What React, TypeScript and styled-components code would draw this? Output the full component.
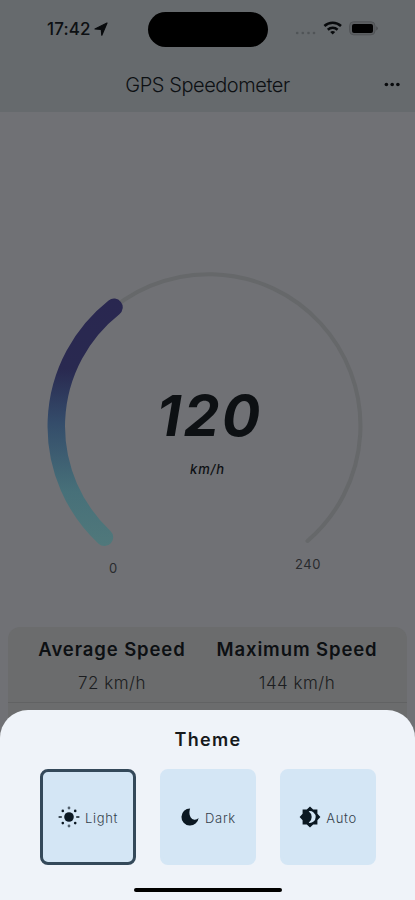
import React from "react";
import styled, { createGlobalStyle } from "styled-components";

const GlobalStyle = createGlobalStyle`
  *, *::before, *::after { box-sizing: border-box; }
  html, body { margin: 0; padding: 0; }
  body { background: #707175; font-family: Inter, "Liberation Sans", sans-serif; }
`;

const Screen = styled.div`
  width: 415px;
  height: 900px;
  position: relative;
  overflow: hidden;
  background: #707175;
  color: #0d1013;
  display: flex;
  flex-direction: column;
`;

const Header = styled.header`
  height: 112px;
  flex: none;
  background: #666a6d;
`;

const StatusBar = styled.div`
  height: 58px;
  display: grid;
  grid-template-columns: 148px 120px 147px;
  align-items: center;
`;

const Clock = styled.div`
  display: flex;
  align-items: center;
  gap: 4px;
  padding-left: 47px;
  font-size: 17px;
  font-weight: 450;
  letter-spacing: 0.1px;
`;

const Island = styled.div`
  height: 35px;
  border-radius: 18px;
  background: #000;
`;

const Indicators = styled.div`
  display: flex;
  align-items: center;
  padding-left: 27px;
`;

const AppBar = styled.div`
  height: 54px;
  display: grid;
  grid-template-columns: 46px 1fr 46px;
  align-items: center;
`;

const Title = styled.h1`
  grid-column: 2;
  margin: 0;
  text-align: center;
  font-size: 20px;
  line-height: 24px;
  font-weight: 300;
  letter-spacing: -0.45px;
  white-space: nowrap;
`;

const Gauge = styled.section`
  height: 515px;
  flex: none;
  display: grid;
  grid-template: 100% / 100%;
  & > * { grid-area: 1 / 1; }
`;

const Reading = styled.div`
  display: flex;
  flex-direction: column;
  align-items: center;
  padding-top: 268px;
  font-style: italic;
`;

const Speed = styled.div`
  font-size: 57px;
  line-height: 72px;
  font-weight: 650;
  letter-spacing: 2.4px;
  padding-left: 4px;
`;

const Unit = styled.div`
  margin-top: 9px;
  font-size: 13px;
  line-height: 16px;
  font-weight: 550;
  letter-spacing: 0.9px;
`;

const Scale = styled.div`
  display: flex;
  justify-content: space-between;
  padding: 444px 94px 0 109px;
  font-size: 13px;
  line-height: 16px;
  letter-spacing: 0.6px;
  color: #292b2e;
`;

const ScaleMin = styled.span`
  margin-top: 4px;
`;

const Stats = styled.section`
  margin: 0 8px;
  height: 160px;
  flex: none;
  border-radius: 12px;
  background: #6b6c6d;
`;

const StatsRow = styled.div`
  height: 76px;
  display: grid;
  grid-template-columns: 208px 162px;
  padding-top: 11px;
  border-bottom: 1px solid #616263;
`;

const Stat = styled.div`
  display: flex;
  flex-direction: column;
  align-items: center;
  gap: 12px;
  white-space: nowrap;
`;

const StatName = styled.div`
  font-size: 18.5px;
  line-height: 22px;
  font-weight: 600;
  letter-spacing: 0.9px;
`;

const StatValue = styled.div`
  font-size: 17px;
  line-height: 23px;
  font-weight: 300;
  letter-spacing: 0.5px;
  color: #1b1d20;
`;

const Sheet = styled.section`
  position: absolute;
  left: 0;
  right: 0;
  bottom: 0;
  height: 190px;
  border-radius: 28px 28px 0 0;
  background: #eff3f9;
  display: flex;
  flex-direction: column;
  align-items: center;
`;

const SheetTitle = styled.h2`
  margin: 18px 0 0;
  padding-left: 1px;
  font-size: 18px;
  line-height: 24px;
  font-weight: 600;
  letter-spacing: 1.3px;
  color: #16191c;
`;

const Options = styled.div`
  display: flex;
  gap: 24px;
  margin-top: 17px;
`;

const Option = styled.button<{ $selected?: boolean }>`
  width: 96px;
  height: 96px;
  padding: 0 0 0 1px;
  border: 3px solid ${(p) => (p.$selected ? "#34495a" : "#d4e6f5")};
  border-radius: 8px;
  background: #d4e6f5;
  display: flex;
  align-items: center;
  justify-content: center;
  gap: 5px;
  font-family: inherit;
  font-size: 13px;
  line-height: 18px;
  font-weight: 300;
  letter-spacing: 0.65px;
  color: #35414b;
`;

const OptionLabel = styled.span`
  padding-top: 1px;
`;

const HomeIndicator = styled.div`
  width: 148px;
  height: 4px;
  margin-top: 23px;
  border-radius: 2px;
  background: #000;
`;

const LocationIcon = () => (
  <svg width="14" height="14" viewBox="0 0 14 14">
    <path d="M13 1 1 7l6.300.5.500 5.700Z" fill="#080a0c" stroke="#080a0c" strokeWidth="1.2" strokeLinejoin="round" />
  </svg>
);

const StatusIcons = () => (
  <svg width="88" height="22" viewBox="295 18 88 22">
    <g fill="#505457">
      <circle cx="297.2" cy="33" r="1.3" />
      <circle cx="302.8" cy="33" r="1.3" />
      <circle cx="308.5" cy="33" r="1.3" />
      <circle cx="314" cy="33" r="1.3" />
    </g>
    <g fill="none" stroke="#080a0c" strokeWidth="2.5">
      <path d="M324.4 26a12 12 0 0 1 16.6 0" />
      <path d="M327.8 29.7a7.3 7.3 0 0 1 9.8 0" />
    </g>
    <path d="m332.7 34.5-2.5-2.6q2.5-2 5 0Z" fill="#080a0c" />
    <rect x="349.6" y="21.8" width="25.4" height="13" rx="4" fill="#5c5f62" stroke="#505356" />
    <rect x="352" y="24" width="21" height="9" rx="2" fill="#000" />
    <path d="M376.3 26.2q3 2.1 0 4.2Z" fill="#484b4e" />
  </svg>
);

const MoreIcon = () => (
  <svg width="46" height="20" viewBox="0 0 46 20" fill="#080a0c">
    <circle cx="17.4" cy="9.5" r="1.8" />
    <circle cx="23.2" cy="9.5" r="1.8" />
    <circle cx="28.9" cy="9.5" r="1.8" />
  </svg>
);

const Dial = () => (
  <svg width="415" height="515" viewBox="0 112 415 515" fill="none">
    <defs>
      <linearGradient id="speed" x1="0" y1="300" x2="0" y2="545" gradientUnits="userSpaceOnUse">
        <stop offset="0" stopColor="#292750" />
        <stop offset=".28" stopColor="#292950" />
        <stop offset=".5" stopColor="#344c6a" />
        <stop offset=".78" stopColor="#477079" />
        <stop offset="1" stopColor="#50787b" />
      </linearGradient>
    </defs>
    <path d="M105 536.5A151.7 151.7 0 1 1 307.5 541" stroke="#66686a" strokeWidth="4" strokeLinecap="round" />
    <path d="M104.5 537.3A151.7 151.7 0 0 1 114 307.3" stroke="url(#speed)" strokeWidth="17.5" strokeLinecap="round" />
  </svg>
);

const SunIcon = () => (
  <svg width="22" height="22" viewBox="0 0 22 22" fill="#0b1822">
    <circle cx="11" cy="11" r="4.8" />
    <path d="M.6 10.2h3.2v1.6H.6zM18.2 10.2h3.2v1.6h-3.2z" />
    <g fill="#53616d">
      <circle cx="11" cy="2" r="1.4" />
      <circle cx="11" cy="20" r="1.4" />
    </g>
    <circle cx="4.8" cy="4.9" r="1.3" />
    <circle cx="17.2" cy="4.9" r="1.3" />
    <circle cx="4.8" cy="17.1" r="1.3" />
    <circle cx="17.2" cy="17.1" r="1.3" />
  </svg>
);

const MoonIcon = () => (
  <svg width="20" height="20" viewBox="0 0 20 20">
    <path d="M10.1 1.4a8.6 8.6 0 1 0 8.5 9.5 4.9 4.9 0 0 1-8-.7c-1.7-2.9-1.3-6.6-.5-8.8Z" fill="#0b1822" />
  </svg>
);

const AutoIcon = () => (
  <svg width="22" height="22" viewBox="0 0 22 22">
    <path fill="#0b1822" d="m11 .6 3.2 3h4.2v4.2l3 3.2-3 3.2v4.2h-4.2l-3.2 3-3.2-3H3.6v-4.2L.6 11l3-3.2V3.6h4.2Z" />
    <path fill="#d4e6f5" d="M9.7 5.2a5.9 5.9 0 1 1 0 11.6q3-2.2 3-5.8t-3-5.8Z" />
  </svg>
);

export default function App() {
  return (
    <>
      <GlobalStyle />
      <Screen>
        <Header>
          <StatusBar>
            <Clock>17:42<LocationIcon /></Clock>
            <Island />
            <Indicators><StatusIcons /></Indicators>
          </StatusBar>
          <AppBar>
            <Title>GPS Speedometer</Title>
            <MoreIcon />
          </AppBar>
        </Header>
        <Gauge>
          <Dial />
          <Reading>
            <Speed>120</Speed>
            <Unit>km/h</Unit>
          </Reading>
          <Scale><ScaleMin>0</ScaleMin><span>240</span></Scale>
        </Gauge>
        <Stats>
          <StatsRow>
            <Stat><StatName>Average Speed</StatName><StatValue>72 km/h</StatValue></Stat>
            <Stat><StatName>Maximum Speed</StatName><StatValue>144 km/h</StatValue></Stat>
          </StatsRow>
        </Stats>
        <Sheet>
          <SheetTitle>Theme</SheetTitle>
          <Options>
            <Option $selected><SunIcon /><OptionLabel>Light</OptionLabel></Option>
            <Option><MoonIcon /><OptionLabel>Dark</OptionLabel></Option>
            <Option><AutoIcon /><OptionLabel>Auto</OptionLabel></Option>
          </Options>
          <HomeIndicator />
        </Sheet>
      </Screen>
    </>
  );
}
